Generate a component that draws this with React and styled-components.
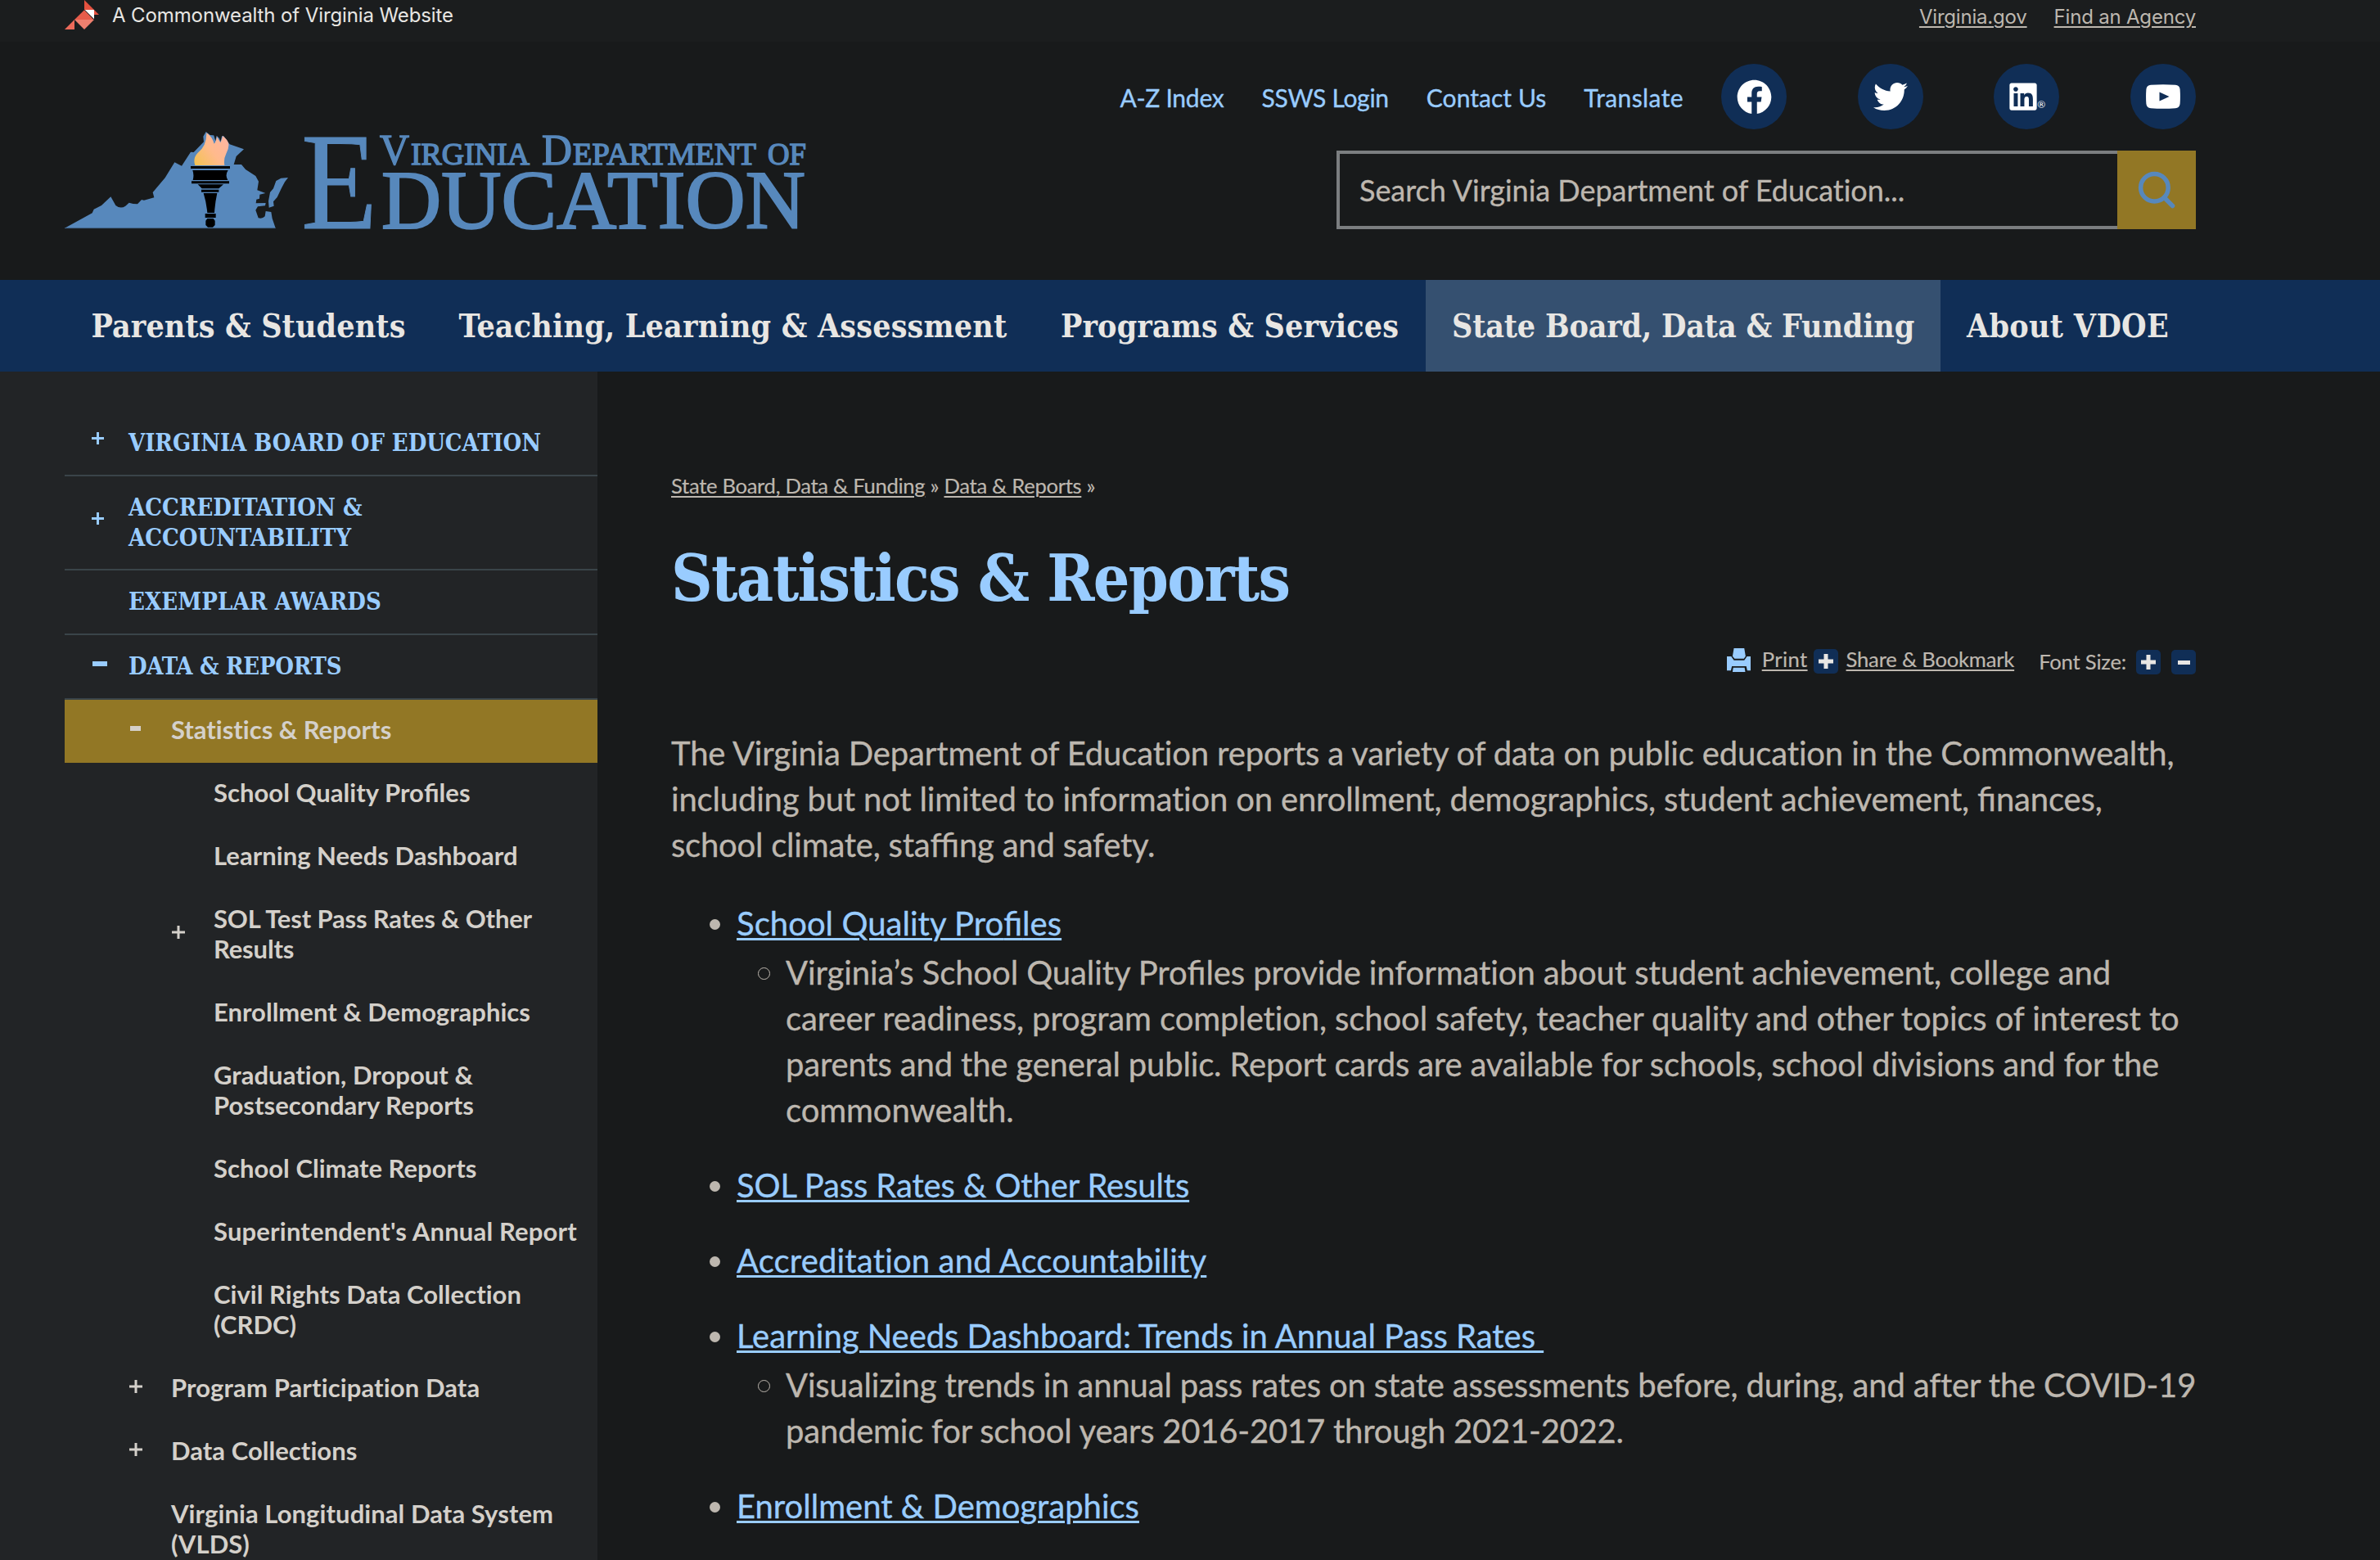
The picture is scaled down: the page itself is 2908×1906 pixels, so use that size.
import React from "react";
import styled, { createGlobalStyle } from "styled-components";
import { FaFacebook, FaTwitter, FaLinkedin } from "react-icons/fa";

const color = {
  page: "#181a1b",
  topbar: "#1b1d1e",
  side: "#222426",
  navy: "#102e56",
  navyActive: "#355070",
  gold: "#927725",
  sky: "#99ccff",
  logo: "#5788bc",
  text: "#bdb7af",
  bright: "#e8e6e3",
  sideText: "#d4d0ca",
  rule: "#3a4449",
  field: "#7b7e80",
};

const lato = `Lato, "Open Sans", sans-serif`;
const serif = `"DejaVu Serif", "Liberation Serif", serif`;

const GlobalStyle = createGlobalStyle`
  * { box-sizing: border-box; }
  body {
    margin: 0;
    background: ${color.page};
    color: ${color.text};
    font-family: ${lato};
    font-variant-ligatures: none;
    -webkit-text-stroke: 0.35px currentColor;
  }
  svg { -webkit-text-stroke: 0; }
  ul { list-style: none; margin: 0; padding: 0; }
  a { color: inherit; }
`;

const Page = styled.div`
  height: 1906px;
  overflow: hidden;
`;

/* ---------- top bar ---------- */

const TopBar = styled.div`
  display: flex;
  justify-content: space-between;
  width: 100%;
  height: 51px;
  padding: 0 225px 0 79px;
  background: ${color.topbar};
  font: 24px/36px Inter, sans-serif;
  -webkit-text-stroke: 0;
`;

const TopBrand = styled.div`
  display: flex;
  gap: 16px;
  color: ${color.bright};
  letter-spacing: -0.11px;
`;

const TopName = styled.span`
  padding-top: 1px;
`;

const TopLinks = styled.div`
  display: flex;
  gap: 33px;
  padding-top: 3px;
  letter-spacing: -0.2px;
`;

const UnderLink = styled.a`
  text-decoration: underline;
  text-decoration-thickness: 2px;
  text-underline-offset: 3px;
  white-space: nowrap;
`;

/* ---------- header ---------- */

const Header = styled.header`
  display: flex;
  justify-content: space-between;
  align-items: flex-start;
  height: 291px;
  padding: 27px 225px 0 79px;
`;

const LogoSvg = styled.svg`
  display: block;
  overflow: visible;
  width: 910px;
  height: 130px;
  margin-top: 77px;
`;

const HeaderTools = styled.div`
  display: flex;
  flex-direction: column;
  align-items: flex-end;
  gap: 26px;
`;

const UtilityRow = styled.div`
  display: flex;
  align-items: center;
  gap: 46px;
`;

const UtilityLink = styled.a`
  padding-top: 2px;
  color: ${color.sky};
  font-size: 30px;
  line-height: 36px;
  white-space: nowrap;
  letter-spacing: ${(p) => p.$ls}px;
`;

const SocialList = styled.div`
  display: flex;
  justify-content: space-between;
  width: 580px;
`;

const SocialButton = styled.a`
  display: flex;
  align-items: center;
  justify-content: center;
  width: 80px;
  height: 80px;
  border-radius: 50%;
  background: ${color.navy};
  color: #fff;
`;

const Registered = styled.span`
  align-self: flex-end;
  margin: 0 0 24px -2px;
  font-size: 12px;
  line-height: 12px;
  -webkit-text-stroke: 0;
`;

const SearchForm = styled.div`
  display: flex;
  width: 1050px;
  height: 96px;
`;

const SearchField = styled.div`
  display: flex;
  align-items: center;
  flex: 1;
  padding-left: 24px;
  border: 4px solid ${color.field};
  border-right: 0;
  font-size: 36px;
  line-height: 44px;
  letter-spacing: -0.03px;
  white-space: nowrap;
`;

const SearchButton = styled.div`
  display: flex;
  align-items: center;
  justify-content: center;
  width: 96px;
  background: ${color.gold};
`;

/* ---------- navigation ---------- */

const Nav = styled.nav`
  display: flex;
  height: 112px;
  padding-left: 79px;
  background: ${color.navy};
  -webkit-text-stroke: 0;
`;

const NavItem = styled.a`
  display: flex;
  align-items: center;
  justify-content: center;
  width: ${(p) => p.$w}px;
  background: ${(p) => (p.$active ? color.navyActive : "transparent")};
  color: ${color.bright};
  font: bold condensed 39px/48px ${serif};
  letter-spacing: ${(p) => p.$ls}px;
  white-space: nowrap;
`;

/* ---------- sidebar ---------- */

const Main = styled.div`
  display: flex;
  height: 1452px;
`;

const Sidebar = styled.aside`
  width: 730px;
  padding: 49px 0 0 79px;
  background: ${color.side};
  -webkit-text-stroke: 0;
`;

const indent = { 1: 78, 2: 130, 3: 182 };
const markIndent = { 1: 33, 2: 79, 3: 131 };

const SideRow = styled.div`
  display: grid;
  grid-template-columns: ${(p) => indent[p.$level]}px 1fr;
  align-items: center;
  padding: ${(p) => (p.$level === 1 ? "20px 0" : "18px 0 22px")};
  border-bottom: ${(p) => (p.$level === 1 ? `2px solid ${color.rule}` : "0")};
  background: ${(p) => (p.$active ? color.gold : "transparent")};
  color: ${(p) => (p.$level === 1 ? color.sky : color.sideText)};
  font: ${(p) =>
    p.$level === 1 ? `bold condensed 29px/36.8px ${serif}` : `bold 31px/37px ${lato}`};
  white-space: nowrap;
`;

const SideMark = styled.span`
  display: flex;
  align-items: center;
  margin-left: ${(p) => markIndent[p.$level] + (p.$kind === "minus" ? 1 : 0)}px;
  margin-bottom: ${(p) => (p.$level > 1 ? 3 : p.$kind === "minus" ? 8 : 11)}px;
`;

const SideLabel = styled.span`
  letter-spacing: ${(p) => p.$ls}px;
`;

/* ---------- content ---------- */

const Content = styled.main`
  width: 1953px;
  padding: 121px 0 0 90px;
`;

const Breadcrumb = styled.div`
  font-size: 25.6px;
  line-height: 36px;
  letter-spacing: -0.3px;
  -webkit-text-stroke: 0.2px currentColor;
`;

const Title = styled.h1`
  margin: 51px 0 37px;
  color: ${color.sky};
  font: bold condensed 78px/90px ${serif};
  letter-spacing: -1.65px;
  -webkit-text-stroke: 0;
`;

const PageTools = styled.div`
  display: flex;
  justify-content: flex-end;
  align-items: flex-start;
  height: 35px;
  font-size: 25.6px;
  line-height: 32px;
  -webkit-text-stroke: 0.2px currentColor;
`;

const ToolPart = styled.span`
  display: block;
  margin: ${(p) => p.$top || 0}px 0 0 ${(p) => p.$left || 0}px;
  white-space: nowrap;
  letter-spacing: ${(p) => p.$ls || 0}px;
`;

const ToolBox = styled.span`
  display: flex;
  align-items: center;
  justify-content: center;
  width: 30px;
  height: 30px;
  border-radius: 5px;
  background: ${color.navy};
  color: ${color.bright};
`;

const Intro = styled.p`
  margin: 68px 0 40px;
  font-size: 40px;
  line-height: 56px;
`;

const Line = styled.span`
  display: block;
  white-space: nowrap;
  letter-spacing: ${(p) => p.$ls}px;
`;

const Lig = styled.span`
  letter-spacing: 0;
  font-variant-ligatures: common-ligatures;
`;

const Reports = styled.ul`
  display: flex;
  flex-direction: column;
  gap: 36px;
  font-size: 40px;
  line-height: 56px;
`;

const Report = styled.li`
  display: grid;
  grid-template-columns: 80px 1fr;
`;

const Disc = styled.span`
  width: 13px;
  height: 13px;
  margin: 23px 0 0 47px;
  border-radius: 50%;
  background: ${color.text};
`;

const ReportLink = styled.a`
  display: inline-block;
  justify-self: start;
  color: ${color.sky};
  text-decoration: underline;
  text-decoration-thickness: 3px;
  text-underline-offset: 3px;
  white-space: pre;
  letter-spacing: ${(p) => p.$ls}px;
`;

const Detail = styled.div`
  grid-column: 2;
  display: grid;
  grid-template-columns: 60px 1fr;
  margin-top: 4px;
`;

const Ring = styled.span`
  width: 15px;
  height: 15px;
  margin: 22px 0 0 26px;
  border: 1.5px solid ${color.text};
  border-radius: 50%;
`;

/* Keeps the fi / ffi ligatures while the other ones stay off. */
function Text({ children }) {
  return children
    .split(/(ffi|fi)/)
    .map((s, i) => (i % 2 ? <Lig key={i}>{s}</Lig> : s));
}

function Cardinal() {
  return (
    <svg width="42" height="36" viewBox="57 0 126 108">
      <path d="M129 0L165 36H129Z" fill="#e4513f" />
      <path d="M165 36L183 54H165Z" fill="#e4513f" />
      <path d="M129 37L163 72H93Z" fill="#e65c4b" />
      <path d="M131 36H165V70Z" fill="#fff" />
      <path d="M93 72H165L129 108Z" fill="#ef7f6e" />
      <path d="M57 108L93 72V108Z" fill="#ec6a5a" />
    </svg>
  );
}

function Logo() {
  return (
    <LogoSvg viewBox="79 155 910 130">
      <defs>
        <linearGradient id="flame" x1="0" y1="1" x2="1" y2="0.3">
          <stop offset="0" stopColor="#f2c34f" />
          <stop offset="0.55" stopColor="#ffba8c" />
          <stop offset="1" stopColor="#ffb5a0" />
        </linearGradient>
      </defs>
      <g transform="translate(70 145) scale(0.33333)">
        <g fill={color.logo}>
          <path d="M27 401L128 346L134 332L162 318L196 286L214 318Q232 332 250 320L263 308L278 312L294 313L309 297L318 299L355 289L350 270L395 217L430 160L456 173L489 122L500 123L537 85L535 65L545 48L560 60L590 62L610 64L632 94L684 112L656 138L647 168H675L690 186L727 210L738 230L733 262L763 273L742 278L741 293L730 296L728 310L764 309L762 319L735 322L727 335L737 364Q752 368 761 358L764 339L784 342L788 366L800 401Z" />
          <path d="M802 228L820 218L846 216L834 232L822 254L806 288L792 304L794 320L776 326L774 302L780 270L792 256Z" />
        </g>
        <path fill={color.page} d="M572 55L580 82L584 62L594 72L598 84L604 62L596 50Z" />
        <path
          fill="url(#flame)"
          d="M505 171Q496 145 515 125Q548 100 547 52Q568 66 575 92Q582 84 585 66L598 88Q604 76 606 63Q624 76 628 92Q630 108 619 128Q609 148 613 171Z"
        />
        <path d="M489 174H633V183H489ZM496 189H626Q614 207 625 225H497Q502 207 496 189ZM492 229H630V238H492ZM515 241H609L592 256H530ZM528 260H592V269H528ZM536 273H586Q578 310 576 345H550Q546 305 536 273ZM542 348H581V363H542ZM550 366H572L578 374V390L570 398H552L544 390V374Z" />
        <path d="M27 401H800" stroke="#41658c" strokeWidth="2.5" />
      </g>
      <g fill={color.logo} stroke={color.logo} fontFamily="Liberation Serif, serif">
        <text x="368" y="278.5" fontSize="169" strokeWidth="1" textLength="93" lengthAdjust="spacingAndGlyphs">E</text>
        <g strokeWidth="1.5">
          <text x="464" y="201" fontSize="53" textLength="36" lengthAdjust="spacingAndGlyphs">V</text>
          <text x="502" y="201" fontSize="37.5" textLength="145" lengthAdjust="spacingAndGlyphs">IRGINIA</text>
          <text x="662" y="201" fontSize="53" textLength="37" lengthAdjust="spacingAndGlyphs">D</text>
          <text x="700" y="201" fontSize="37.5" textLength="224" lengthAdjust="spacingAndGlyphs">EPARTMENT</text>
          <text x="938" y="201" fontSize="37.5" textLength="47" lengthAdjust="spacingAndGlyphs">OF</text>
        </g>
        <text x="466" y="278.5" fontSize="102" strokeWidth="2.2" textLength="518" lengthAdjust="spacingAndGlyphs">DUCATION</text>
      </g>
    </LogoSvg>
  );
}

function Youtube() {
  return (
    <svg width="42" height="30" viewBox="0 0 42 30">
      <path
        fill="#fff"
        fillRule="evenodd"
        d="M6 .8Q21-.4 36 .8Q41 1.2 41.6 6Q42.3 15 41.6 24Q41 28.8 36 29.2Q21 30.4 6 29.2Q1 28.8.4 24Q-.3 15 .4 6Q1 1.2 6 .8ZM16.5 9.5V20.5L28.5 15Z"
      />
    </svg>
  );
}

function Printer() {
  return (
    <svg width="29" height="29" viewBox="71 96 71 87" preserveAspectRatio="none" fill={color.sky}>
      <path d="M92 96H123L127 125L122 134H94L88 125Z" />
      <path d="M71 126H84L92 140H123L131 126H142V178H132L129 162H86L83 178H71Z" />
      <path d="M90 167H124L126 183H88Z" />
    </svg>
  );
}

function Sign({ plus, w, t }) {
  return (
    <svg width={w} height={plus ? w : t} viewBox={`0 0 ${w} ${plus ? w : t}`} fill="currentColor">
      <rect x="0" y={plus ? (w - t) / 2 : 0} width={w} height={t} />
      {plus && <rect x={(w - t) / 2} y="0" width={t} height={w} />}
    </svg>
  );
}

function Mark({ kind, level }) {
  if (kind === "plus") return <Sign plus w={level === 1 ? 15 : 16} t={3} />;
  if (kind === "minus") return <Sign w={level === 1 ? 18 : 13} t={6} />;
  return null;
}

const navItems = [
  ["Parents & Students", 449, 0.12],
  ["Teaching, Learning & Assessment", 735, 0.18],
  ["Programs & Services", 479, 0.15],
  ["State Board, Data & Funding", 629, -0.17],
  ["About VDOE", 311, 0.3],
];

const sideItems = [
  { level: 1, mark: "plus", ls: -0.08, lines: ["VIRGINIA BOARD OF EDUCATION"] },
  { level: 1, mark: "plus", ls: 0, lines: ["ACCREDITATION &", "ACCOUNTABILITY"] },
  { level: 1, ls: 0.1, lines: ["EXEMPLAR AWARDS"] },
  { level: 1, mark: "minus", ls: -0.3, lines: ["DATA & REPORTS"] },
  { level: 2, mark: "minus", ls: -0.01, active: true, lines: ["Statistics & Reports"] },
  { level: 3, ls: 0.03, lines: ["School Quality Profiles"] },
  { level: 3, ls: 0.02, lines: ["Learning Needs Dashboard"] },
  { level: 3, mark: "plus", ls: -0.17, lines: ["SOL Test Pass Rates & Other", "Results"] },
  { level: 3, ls: 0.01, lines: ["Enrollment & Demographics"] },
  { level: 3, ls: 0.04, lines: ["Graduation, Dropout &", "Postsecondary Reports"] },
  { level: 3, ls: 0.02, lines: ["School Climate Reports"] },
  { level: 3, ls: 0.18, lines: ["Superintendent's Annual Report"] },
  { level: 3, ls: 0.04, lines: ["Civil Rights Data Collection", "(CRDC)"] },
  { level: 2, mark: "plus", ls: 0.12, lines: ["Program Participation Data"] },
  { level: 2, mark: "plus", ls: 0.04, lines: ["Data Collections"] },
  { level: 2, ls: 0.07, lines: ["Virginia Longitudinal Data System", "(VLDS)"] },
];

const intro = [
  ["The Virginia Department of Education reports a variety of data on public education in the Commonwealth,", -0.145],
  ["including but not limited to information on enrollment, demographics, student achievement, finances,", -0.17],
  ["school climate, staffing and safety.", -0.22],
];

const reports = [
  {
    title: "School Quality Profiles",
    ls: 0.05,
    detail: [
      ["Virginia’s School Quality Profiles provide information about student achievement, college and", -0.08],
      ["career readiness, program completion, school safety, teacher quality and other topics of interest to", -0.11],
      ["parents and the general public. Report cards are available for schools, school divisions and for the", -0.165],
      ["commonwealth.", -0.1],
    ],
  },
  { title: "SOL Pass Rates & Other Results", ls: -0.12 },
  { title: "Accreditation and Accountability", ls: 0.16 },
  {
    title: "Learning Needs Dashboard: Trends in Annual Pass Rates ",
    ls: -0.03,
    detail: [
      ["Visualizing trends in annual pass rates on state assessments before, during, and after the COVID-19", -0.155],
      ["pandemic for school years 2016-2017 through 2021-2022.", -0.21],
    ],
  },
  { title: "Enrollment & Demographics", ls: 0 },
];

function Lines({ items }) {
  return items.map(([s, ls]) => (
    <Line key={s} $ls={ls}>
      <Text>{s}</Text>
    </Line>
  ));
}

export default function App() {
  return (
    <Page>
      <GlobalStyle />
      <TopBar>
        <TopBrand>
          <Cardinal />
          <TopName>A Commonwealth of Virginia Website</TopName>
        </TopBrand>
        <TopLinks>
          <UnderLink>Virginia.gov</UnderLink>
          <UnderLink>Find an Agency</UnderLink>
        </TopLinks>
      </TopBar>

      <Header>
        <Logo />
        <HeaderTools>
          <UtilityRow>
            <UtilityLink $ls={-0.25}>A-Z Index</UtilityLink>
            <UtilityLink $ls={-0.28}>SSWS Login</UtilityLink>
            <UtilityLink $ls={0.05}>Contact Us</UtilityLink>
            <UtilityLink $ls={0.4}>Translate</UtilityLink>
            <SocialList>
              <SocialButton><FaFacebook size={43} /></SocialButton>
              <SocialButton><FaTwitter size={42} /></SocialButton>
              <SocialButton>
                <FaLinkedin size={38} />
                <Registered>®</Registered>
              </SocialButton>
              <SocialButton><Youtube /></SocialButton>
            </SocialList>
          </UtilityRow>
          <SearchForm>
            <SearchField>Search Virginia Department of Education...</SearchField>
            <SearchButton>
              <svg width="46" height="46" viewBox="0 0 46 46" fill="none" stroke={color.logo} strokeWidth="5.5" strokeLinecap="round">
                <circle cx="20.4" cy="20.3" r="16.8" />
                <path d="M32.5 32.5L42.5 42.5" />
              </svg>
            </SearchButton>
          </SearchForm>
        </HeaderTools>
      </Header>

      <Nav>
        {navItems.map(([label, w, ls]) => (
          <NavItem key={label} $w={w} $ls={ls} $active={label.startsWith("State")}>
            {label}
          </NavItem>
        ))}
      </Nav>

      <Main>
        <Sidebar>
          {sideItems.map((it) => (
            <SideRow key={it.lines[0]} $level={it.level} $active={it.active}>
              <SideMark $level={it.level} $kind={it.mark}>
                <Mark kind={it.mark} level={it.level} />
              </SideMark>
              <SideLabel $ls={it.ls}>
                {it.lines.map((s, i) => (
                  <React.Fragment key={s}>
                    {i > 0 && <br />}
                    <Text>{s}</Text>
                  </React.Fragment>
                ))}
              </SideLabel>
            </SideRow>
          ))}
        </Sidebar>

        <Content>
          <Breadcrumb>
            <UnderLink>State Board, Data & Funding</UnderLink> » <UnderLink>Data & Reports</UnderLink> »
          </Breadcrumb>
          <Title>Statistics & Reports</Title>
          <PageTools>
            <ToolPart $top={3}><Printer /></ToolPart>
            <ToolPart $left={14} $ls={0.4}><UnderLink>Print</UnderLink></ToolPart>
            <ToolPart $left={7} $top={4}><ToolBox><Sign plus w={18} t={5} /></ToolBox></ToolPart>
            <ToolPart $left={10} $ls={-0.2}><UnderLink>Share & Bookmark</UnderLink></ToolPart>
            <ToolPart $left={30} $top={3} $ls={-0.2}>Font Size:</ToolPart>
            <ToolPart $left={12} $top={5}><ToolBox><Sign plus w={18} t={5} /></ToolBox></ToolPart>
            <ToolPart $left={13} $top={5}><ToolBox><Sign w={15} t={5} /></ToolBox></ToolPart>
          </PageTools>
          <Intro>
            <Lines items={intro} />
          </Intro>
          <Reports>
            {reports.map((r) => (
              <Report key={r.title}>
                <Disc />
                <ReportLink $ls={r.ls}><Text>{r.title}</Text></ReportLink>
                {r.detail && (
                  <Detail>
                    <Ring />
                    <div><Lines items={r.detail} /></div>
                  </Detail>
                )}
              </Report>
            ))}
          </Reports>
        </Content>
      </Main>
    </Page>
  );
}
